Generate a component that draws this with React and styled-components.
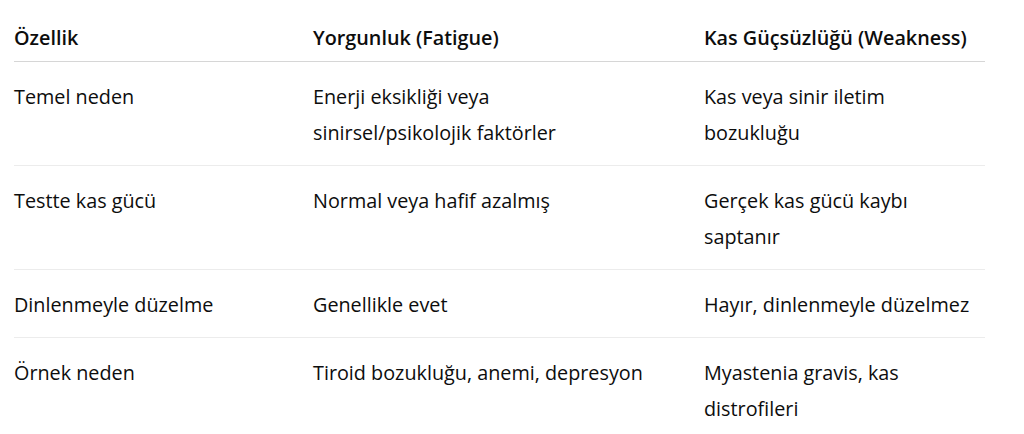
import React from 'react';
import styled, { createGlobalStyle } from 'styled-components';

const GlobalStyle = createGlobalStyle`
  body {
    margin: 0;
    background: #ffffff;
    font-family: "Open Sans", "Noto Sans", sans-serif;
    color: #0d0d0d;
  }
`;

const Wrapper = styled.div`
  padding: 0 39px 0 14px;
`;

const Row = styled.div`
  display: grid;
  grid-template-columns: 299px 391px 1fr;
  border-bottom: 1px solid ${p => (p.head ? '#d6d6d6' : '#ececec')};
  &:last-child {
    border-bottom: none;
  }
`;

const Cell = styled.div`
  font-size: 19.8px;
  line-height: 36px;
  font-weight: ${p => (p.head ? 600 : 400)};
  padding: ${p => (p.head ? '20px 0 5px 0' : '17px 0 14px 0')};
  padding-right: ${p => p.pr}px;
`;

// right padding per column, so text wraps where the original does
const pads = [16, 54, 4];

const rows = [
  ['Temel neden', 'Enerji eksikliği veya sinirsel/psikolojik faktörler', 'Kas veya sinir iletim bozukluğu'],
  ['Testte kas gücü', 'Normal veya hafif azalmış', 'Gerçek kas gücü kaybı saptanır'],
  ['Dinlenmeyle düzelme', 'Genellikle evet', 'Hayır, dinlenmeyle düzelmez'],
  ['Örnek neden', 'Tiroid bozukluğu, anemi, depresyon', 'Myastenia gravis, kas distrofileri'],
];

export default function App() {
  return (
    <>
      <GlobalStyle />
      <Wrapper>
        <Row head>
          {['Özellik', 'Yorgunluk (Fatigue)', 'Kas Güçsüzlüğü (Weakness)'].map((h, i) => (
            <Cell head pr={pads[i]} key={h}>{h}</Cell>
          ))}
        </Row>
        {rows.map(r => (
          <Row key={r[0]}>
            {r.map((c, i) => (
              <Cell pr={pads[i]} key={c}>{c}</Cell>
            ))}
          </Row>
        ))}
      </Wrapper>
    </>
  );
}
